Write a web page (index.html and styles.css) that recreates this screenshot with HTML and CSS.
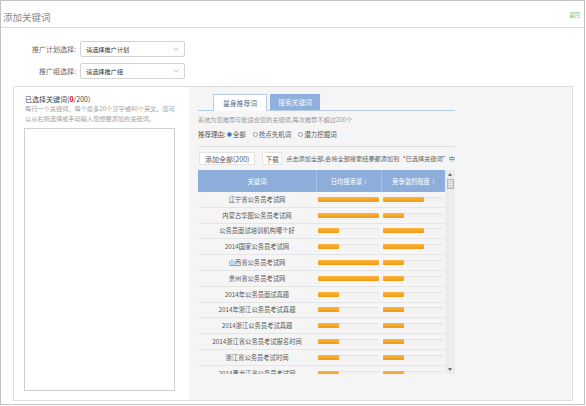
FILE: index.html
```html
<!DOCTYPE html>
<html lang="zh-CN">
<head>
<meta charset="utf-8">
<title>添加关键词</title>
<link rel="stylesheet" href="styles.css">
</head>
<body>
<div class="frame">
  <div class="header">
    <span class="title">添加关键词</span>
    <a class="back" href="#">返回</a>
  </div>

  <div class="form">
    <label class="form-label">推广计划选择:</label>
    <div class="select"><span>请选择推广计划</span><svg class="chev" viewBox="0 0 6 4"><path d="M0.5 0.8 L3 3.2 L5.5 0.8" fill="none" stroke="#a8a8a8" stroke-width="0.8"/></svg></div>
    <label class="form-label">推广组选择:</label>
    <div class="select"><span>请选择推广组</span><svg class="chev" viewBox="0 0 6 4"><path d="M0.5 0.8 L3 3.2 L5.5 0.8" fill="none" stroke="#a8a8a8" stroke-width="0.8"/></svg></div>
  </div>

  <div class="panel">
    <div class="left">
      <div class="sel-title">已选择关键词(<b>0</b>/200)</div>
      <p class="hint">每行一个关键词，每个最多20个汉字或40个英文。您可<br>以从右侧选择或手动输入您想要添加的关键词。</p>
      <div class="textarea"></div>
    </div>

    <div class="right">
      <div class="right-inner">
        <div class="tabs">
          <div class="tab tab-active">量身推荐词</div>
          <div class="tab tab-blue">搜索关键词</div>
        </div>
        <p class="desc">系统为您推荐可能适合您的关键词,每次推荐不超过200个</p>
        <div class="reasons">
          <span>推荐理由:</span>
          <span class="radio radio-on"></span><span class="opt">全部</span>
          <span class="radio"></span><span class="opt">抢点先机词</span>
          <span class="radio"></span><span class="opt">潜力挖掘词</span>
        </div>
        <div class="actions">
          <button class="btn btn-all">添加全部(200)</button>
          <button class="btn btn-dl">下载</button>
          <span class="action-tip">点击添加全部,会将全部搜索结果都添加到“已选择关键词”中</span>
        </div>

        <div class="grid">
          <div class="table">
            <div class="thead">
              <div>关键词</div>
              <div>日均搜索量<svg class="sort" viewBox="0 0 4 7"><path d="M2 0.5 L3.5 2.5 H0.5Z M2 6.5 L3.5 4.5 H0.5Z" fill="#dfe8f5"/></svg></div>
              <div>竞争激烈程度<svg class="sort" viewBox="0 0 4 7"><path d="M2 0.5 L3.5 2.5 H0.5Z M2 6.5 L3.5 4.5 H0.5Z" fill="#dfe8f5"/></svg></div>
            </div>
            <div class="tbody">
              <div class="row"><div class="kw">辽宁省公务员考试网</div><div class="cell c2"><div class="track"><div class="fill" style="width:61px"></div></div></div><div class="cell c3"><div class="track"><div class="fill" style="width:41px"></div></div></div></div>
              <div class="row"><div class="kw">内蒙古华图公务员考试网</div><div class="cell c2"><div class="track"><div class="fill" style="width:61px"></div></div></div><div class="cell c3"><div class="track"><div class="fill" style="width:21px"></div></div></div></div>
              <div class="row"><div class="kw">公务员面试培训机构哪个好</div><div class="cell c2"><div class="track"><div class="fill" style="width:21px"></div></div></div><div class="cell c3"><div class="track"><div class="fill" style="width:41px"></div></div></div></div>
              <div class="row"><div class="kw">2014国家公务员考试网</div><div class="cell c2"><div class="track"><div class="fill" style="width:21px"></div></div></div><div class="cell c3"><div class="track"><div class="fill" style="width:41px"></div></div></div></div>
              <div class="row"><div class="kw">山西省公务员考试网</div><div class="cell c2"><div class="track"><div class="fill" style="width:61px"></div></div></div><div class="cell c3"><div class="track"><div class="fill" style="width:21px"></div></div></div></div>
              <div class="row"><div class="kw">贵州省公务员考试网</div><div class="cell c2"><div class="track"><div class="fill" style="width:61px"></div></div></div><div class="cell c3"><div class="track"><div class="fill" style="width:21px"></div></div></div></div>
              <div class="row"><div class="kw">2014年公务员面试真题</div><div class="cell c2"><div class="track"><div class="fill" style="width:21px"></div></div></div><div class="cell c3"><div class="track"><div class="fill" style="width:21px"></div></div></div></div>
              <div class="row"><div class="kw">2014年浙江公务员考试真题</div><div class="cell c2"><div class="track"><div class="fill" style="width:21px"></div></div></div><div class="cell c3"><div class="track"><div class="fill" style="width:21px"></div></div></div></div>
              <div class="row"><div class="kw">2014浙江公务员考试真题</div><div class="cell c2"><div class="track"><div class="fill" style="width:21px"></div></div></div><div class="cell c3"><div class="track"><div class="fill" style="width:21px"></div></div></div></div>
              <div class="row"><div class="kw">2014浙江省公务员考试报名时间</div><div class="cell c2"><div class="track"><div class="fill" style="width:21px"></div></div></div><div class="cell c3"><div class="track"><div class="fill" style="width:21px"></div></div></div></div>
              <div class="row"><div class="kw">浙江省公务员考试时间</div><div class="cell c2"><div class="track"><div class="fill" style="width:21px"></div></div></div><div class="cell c3"><div class="track"><div class="fill" style="width:21px"></div></div></div></div>
              <div class="row"><div class="kw">2014黑龙江省公务员考试网</div><div class="cell c2"><div class="track"><div class="fill" style="width:21px"></div></div></div><div class="cell c3"><div class="track"><div class="fill" style="width:21px"></div></div></div></div>
            </div>
          </div>
          <div class="scrollbar">
            <svg class="arrow" viewBox="0 0 5 3"><path d="M2.5 0 L5 3 H0Z" fill="#555"/></svg>
            <div class="thumb"></div>
            <div class="spacer"></div>
            <svg class="arrow" viewBox="0 0 5 3"><path d="M2.5 3 L5 0 H0Z" fill="#555"/></svg>
          </div>
        </div>
      </div>
    </div>
  </div>
</div>
</body>
</html>
```

FILE: styles.css
```css
* {
  box-sizing: border-box;
  margin: 0;
  padding: 0;
}

html,
body {
  background: #fff;
}

body {
  width: 586px;
  height: 406px;
  overflow: hidden;
  font-family: "Noto Sans CJK SC", "Noto Sans", sans-serif;
  color: #555;
}

.frame {
  width: 585px;
  height: 405px;
  border: 1px solid #c3c3c3;
  display: flex;
  flex-direction: column;
}

/* header */
.header {
  flex: none;
  height: 27px;
  border-bottom: 1px solid #dcdcdc;
  display: flex;
  justify-content: space-between;
  align-items: flex-start;
  padding: 10px 4px 0 2px;
}

.title {
  font-size: 9.5px;
  line-height: 12px;
  color: #8a8a8a;
}

.back {
  font-size: 5.5px;
  line-height: 7px;
  margin-top: 1px;
  color: #74b874;
  text-decoration: none;
}

/* form */
.form {
  flex: none;
  display: grid;
  grid-template-columns: 75px 105px;
  column-gap: 4px;
  row-gap: 6px;
  padding-top: 13px;
  align-items: center;
}

.form-label {
  font-size: 7px;
  line-height: 16px;
  color: #666;
  text-align: right;
}

.select {
  height: 16px;
  border: 1px solid #d2d2d2;
  border-radius: 2px;
  display: flex;
  align-items: center;
  justify-content: space-between;
  padding: 0 5px;
  font-size: 6.2px;
  color: #333;
  background: #fff;
}

.chev {
  width: 6px;
  height: 4px;
}

/* panel */
.panel {
  flex: none;
  margin: 7px 0 0 12px;
  width: 560px;
  height: 315px;
  border: 1px solid #dedede;
  display: flex;
}

.left {
  flex: none;
  width: 175px;
  padding: 7px 0 0 10px;
  background: #fff;
}

.sel-title {
  font-size: 7px;
  line-height: 10px;
  color: #444;
  padding-left: 1px;
}

.sel-title b {
  color: #e00;
}

.hint {
  font-size: 6.2px;
  line-height: 10px;
  color: #a3a3a3;
  padding-left: 1px;
  white-space: nowrap;
}

.textarea {
  margin-top: 4px;
  width: 151px;
  height: 263px;
  border: 1px solid #d0d0d0;
  background: #fff;
}

.right {
  flex: 1;
  background: #f5f5f5;
  padding: 7px 0 0 9px;
}

.right-inner {
  width: 257px;
}

/* tabs */
.tabs {
  display: flex;
  gap: 3px;
  height: 17px;
  padding-left: 15px;
  border-bottom: 1px solid #b9cbe4;
}

.tab {
  height: 16px;
  font-size: 6.8px;
  display: flex;
  align-items: center;
  justify-content: center;
}

.tab-active {
  width: 54px;
  height: 17px;
  background: #fff;
  border: 1px solid #b9cbe4;
  border-bottom: none;
  color: #56698a;
}

.tab-blue {
  width: 50px;
  background: #8fb0dc;
  color: #f2f6fb;
}

.desc {
  margin-top: 4px;
  font-size: 6.2px;
  line-height: 10px;
  color: #9a9a9a;
  white-space: nowrap;
}

.reasons {
  margin-top: 4px;
  height: 10px;
  display: flex;
  align-items: center;
  font-size: 6.5px;
  color: #555;
  white-space: nowrap;
}

.radio {
  width: 5px;
  height: 5px;
  border-radius: 50%;
  border: 1px solid #9a9a9a;
  background: #fff;
  margin: 0 1px 0 1px;
}

.radio-on {
  border: 1px solid #6f94c6;
  background: radial-gradient(circle, #2f64b0 0 1.4px, #fff 1.6px);
}

.opt {
  margin-right: 6px;
}

.opt:last-child {
  margin-right: 0;
}

.actions {
  margin-top: 7px;
  border-top: 1px solid #dedede;
  padding-top: 5px;
  display: flex;
  align-items: center;
  white-space: nowrap;
}

.btn {
  height: 13px;
  border: 1px solid #e4e4e4;
  background: #fff;
  font-family: inherit;
  font-size: 7px;
  color: #555;
  display: flex;
  align-items: center;
  justify-content: center;
}

.btn-all {
  width: 57px;
  margin-left: 1px;
}

.btn-dl {
  width: 20px;
  margin-left: 7px;
  font-size: 6.5px;
}

.action-tip {
  margin-left: 4px;
  font-size: 6.2px;
  color: #666;
}

/* table */
.grid {
  margin-top: 5px;
  height: 204px;
  display: flex;
}

.table {
  width: 247px;
  display: flex;
  flex-direction: column;
}

.thead {
  flex: none;
  height: 22px;
  background: #8daedb;
  display: grid;
  grid-template-columns: 118px 65px 64px;
  color: #fff;
  font-size: 6.3px;
}

.thead div {
  display: flex;
  align-items: center;
  justify-content: center;
  border-left: 1px solid #a8c1e4;
}

.thead div:first-child {
  border-left: none;
}

.sort {
  width: 3px;
  height: 5px;
  margin-left: 2px;
}

.tbody {
  flex: 1;
  overflow: hidden;
}

.row {
  height: 15.8px;
  display: grid;
  grid-template-columns: 118px 65px 64px;
  align-items: center;
  border-bottom: 1px solid #e5e5e5;
}

.kw {
  font-size: 6.3px;
  color: #555;
  text-align: center;
  white-space: nowrap;
}

.cell {
  display: flex;
  align-items: center;
}

.c2 {
  padding: 0 2px;
}

.c3 {
  padding: 0 2px 0 2px;
}

.track {
  width: 100%;
  height: 5px;
  background: linear-gradient(#e2e2e2 0 1px, #f2f2f2 1px);
}

.fill {
  height: 5px;
  border-radius: 1px;
  background: linear-gradient(#fbb540, #f29811);
}

.scrollbar {
  width: 10px;
  background: #ececec;
  display: flex;
  flex-direction: column;
  align-items: center;
  padding: 3px 0 3px 0;
}

.arrow {
  width: 4px;
  height: 3px;
  flex: none;
}

.thumb {
  margin-top: 3px;
  width: 7px;
  height: 10px;
  border: 1px solid #b5b5b5;
  background: repeating-linear-gradient(#e8e8e8 0 1px, #d0d0d0 1px 2px);
  flex: none;
}

.spacer {
  flex: 1;
}
```
